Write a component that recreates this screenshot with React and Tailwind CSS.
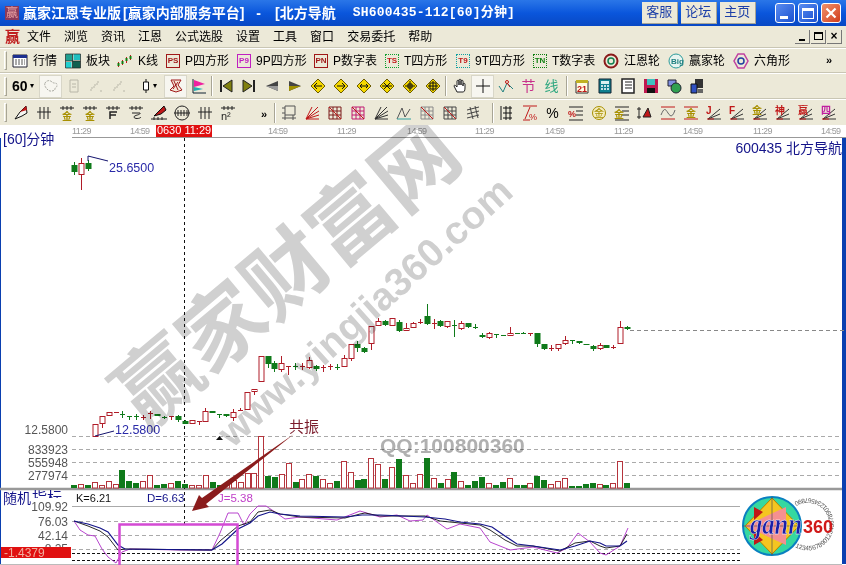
import React from 'react';

// page coordinates: x, body top, body bottom, wick top, wick bottom, kind (r hollow red, g green, c red cross, d green cross)
const candles = [
  [74,165,172,162,175,'g'],[81,163,174,158,190,'r'],[88,163,169,160,171,'g'],
  [95,424,436,424,437,'r'],[102,416,423,416,428,'r'],[109,412,415,412,416,'r'],[116,412,413,412,413,'c'],
  [122,414,415,411,418,'d'],[129,416,417,416,420,'d'],[136,416,417,414,420,'d'],[143,417,418,415,420,'c'],
  [150,413,416,411,419,'c'],[157,414,416,414,416,'g'],[164,417,418,416,419,'d'],[171,416,417,416,420,'c'],
  [178,416,420,415,422,'g'],[185,421,424,420,424,'g'],[192,420,423,420,424,'r'],[199,421,422,421,425,'c'],
  [205,411,421,408,421,'r'],[212,411,413,411,413,'g'],[219,414,415,414,418,'d'],[226,414,416,414,417,'g'],
  [233,412,417,409,421,'r'],[240,410,411,408,411,'c'],[247,392,409,392,410,'r'],[254,389,391,389,395,'r'],
  [261,356,381,356,382,'r'],[268,356,364,356,368,'g'],[274,363,369,361,372,'g'],[281,363,369,356,372,'r'],
  [288,366,367,366,375,'c'],[295,366,367,363,370,'d'],[302,366,367,363,370,'c'],[309,360,367,357,369,'r'],
  [316,366,369,365,371,'g'],[323,367,368,365,372,'c'],[330,366,367,364,370,'c'],[337,367,368,364,370,'d'],
  [344,358,366,355,366,'r'],[351,344,358,344,361,'r'],[357,344,348,341,352,'g'],[364,348,352,347,353,'g'],
  [371,326,343,326,350,'r'],[378,321,325,318,325,'r'],[385,321,325,320,326,'g'],[392,318,325,318,326,'r'],
  [399,322,331,320,332,'g'],[406,328,330,323,330,'r'],[413,323,327,322,328,'r'],[420,322,323,319,324,'c'],
  [427,316,324,304,325,'g'],[434,323,324,319,329,'c'],[440,321,326,320,327,'g'],[447,321,326,321,328,'r'],
  [454,325,326,320,337,'d'],[461,323,328,321,330,'r'],[468,323,327,323,328,'g'],[475,327,328,324,329,'d'],
  [482,335,337,333,338,'g'],[489,333,337,332,339,'r'],[496,334,335,334,338,'d'],[503,335,336,335,336,'d'],
  [510,333,335,327,335,'r'],[517,333,334,333,334,'d'],[523,333,334,332,334,'d'],[530,333,334,333,336,'c'],
  [537,333,344,333,347,'g'],[544,344,349,344,350,'g'],[551,348,349,345,351,'c'],[558,344,348,344,351,'r'],
  [565,340,343,336,345,'r'],[572,340,341,340,344,'d'],[579,341,343,341,344,'g'],[586,344,345,344,345,'g'],
  [593,346,349,345,351,'g'],[600,345,348,343,350,'r'],[606,345,348,345,348,'g'],[613,347,348,345,349,'c'],
  [620,327,343,321,343,'r'],[627,327,329,326,330,'g'],
];

const volumes = [
  [74,485,'g'],[81,484,'r'],[88,485,'g'],[95,482,'r'],[102,485,'r'],[109,481,'r'],[116,484,'r'],[122,470,'g'],
  [129,481,'g'],[136,483,'g'],[143,481,'r'],[150,475,'r'],[157,485,'g'],[164,484,'g'],[171,483,'r'],[178,481,'g'],
  [185,484,'g'],[192,485,'r'],[199,485,'r'],[206,475,'r'],[213,482,'g'],[220,485,'g'],[227,483,'r'],[234,480,'r'],
  [241,482,'r'],[248,473,'r'],[254,473,'r'],[261,436,'r'],[268,476,'g'],[275,477,'g'],[282,474,'r'],[289,463,'r'],
  [296,482,'g'],[302,479,'r'],[309,474,'r'],[316,476,'g'],[323,479,'r'],[330,483,'r'],[337,481,'g'],[344,461,'r'],
  [351,472,'r'],[358,480,'g'],[364,479,'g'],[371,458,'r'],[378,464,'r'],[385,479,'g'],[392,467,'r'],[399,459,'g'],
  [406,475,'r'],[413,483,'r'],[420,474,'r'],[427,458,'g'],[434,478,'r'],[441,483,'g'],[448,479,'r'],[454,472,'g'],
  [461,481,'r'],[468,485,'g'],[475,481,'g'],[482,477,'g'],[489,483,'r'],[496,485,'g'],[503,482,'g'],[510,478,'r'],
  [517,485,'g'],[524,485,'g'],[530,483,'r'],[537,476,'g'],[544,480,'g'],[551,484,'r'],[558,481,'r'],[565,478,'r'],
  [572,486,'g'],[579,486,'g'],[586,484,'g'],[593,483,'g'],[600,484,'r'],[606,485,'g'],[613,483,'r'],[620,461,'r'],[627,483,'g'],
];

const lineJ = '74,521 80,530 88,535 95,536 102,549 108,557 116,563 122,552 130,549 180,550 212,550 220,533 228,513 238,513 244,525 250,514 258,506 266,506 275,512 285,519 300,517 337,520 360,511 380,517 397,515 410,521 423,520 427,515 447,529 460,524 480,528 490,542 510,550 533,547 557,553 567,548 578,533 590,542 600,553 606,555 620,546 628,528';
const lineK = '74,521 88,526 100,531 108,537 118,550 125,549 212,550 220,541 238,526 250,522 258,512 270,510 280,514 300,517 345,518 360,514 365,513 380,516 425,516 440,521 460,523 480,525 490,530 505,540 517,546 533,546 560,551 575,543 590,541 600,546 606,548 620,546 627,534';
const lineD = '74,521 88,524 100,528 108,532 118,545 125,549 212,550 222,544 238,529 250,523 258,516 270,512 280,514 300,516 345,517 362,515 380,515 425,517 445,519 460,522 480,524 492,527 505,536 517,544 533,546 560,550 575,546 590,541 600,543 606,546 620,546 627,541';

const timeLabels = [
  ['11:29', 'w-[58px]'], ['14:59', 'w-[26px]'], ['red', 'w-[56px]'], ['', 'w-[56px]'],
  ['14:59', 'w-[69px]'], ['11:29', 'w-[70px]'], ['14:59', 'w-[68px]'], ['11:29', 'w-[70px]'],
  ['14:59', 'w-[69px]'], ['11:29', 'w-[69px]'], ['14:59', 'w-[70px]'], ['11:29', 'w-[68px]'], ['14:59', 'w-[20px]'],
];

const Ic = ({ children, w = 16 }) => (
  <svg width={w} height="16" viewBox="0 0 16 16" fill="none" className="block shrink-0">{children}</svg>
);

const Grip = () => <div className="w-[3px] h-[19px] mx-[4px] border-l border-t border-white border-r border-r-[#a8a595] border-b border-b-[#a8a595] shrink-0" />;
const Sep = ({ m = 'mx-[1px]' }) => <div className={`w-[2px] h-[20px] ${m} border-l border-[#a8a595] bg-white shrink-0`} />;

const Tagged = ({ t, c }) => (
  <div className={`w-[14px] h-[14px] border text-[8px] leading-[12px] text-center font-bold ${c}`}>{t}</div>
);

const Labeled = ({ icon, label, w }) => (
  <div className={`flex items-center gap-[5px] shrink-0 ${w}`}>
    {icon}
    <span className="text-[12px] text-black whitespace-nowrap">{label}</span>
  </div>
);

const Ring = ({ c, inner }) => (
  <Ic>
    <circle cx="8" cy="8" r="6.5" stroke={c} strokeWidth="2" />
    <circle cx="8" cy="8" r="3" stroke={inner} strokeWidth="1.5" />
  </Ic>
);

const Diamond = ({ children }) => (
  <div className="w-[23px] flex justify-center shrink-0">
    <Ic>
      <path d="M8 1 15 8 8 15 1 8Z" fill="#f5d800" stroke="#6b5a00" />
      {children}
    </Ic>
  </div>
);

const Cell = ({ children, active }) => (
  <div className={`w-[23px] h-[23px] flex items-center justify-center shrink-0 ${active ? 'bg-[#f7f6f0] border border-[#d8d6c8]' : ''}`}>{children}</div>
);

const Fan = ({ c = '#c01818' }) => <Ic><path d="M2 14 14 2M2 14 15 6M2 14 15 10M2 14 8 2M2 14H15" stroke={c} /></Ic>;
const Wedge = ({ c = '#c01818', t = '', tc = '#c01818' }) => (
  <Ic>
    <path d="M2 14 14 4M2 14 14 9M2 14H15" stroke="#333" />
    <text x="0" y="9" fontSize="10" fontWeight="700" fill={tc}>{t}</text>
    <path d="M1 14h7" stroke={c} />
  </Ic>
);
const Hatch = ({ c = '#7a1a1a' }) => (
  <Ic>
    <path d="M2 2h12v12H2ZM2 6h12M2 10h12M6 2v12M10 2v12" stroke={c} />
    <path d="M2 2 14 14" stroke="#c01818" />
  </Ic>
);
const Bars4 = () => <Ic><path d="M4 2v12M8 2v12M12 2v12M1 7h14" stroke="#222" /></Ic>;
const Gold = ({ c = '#a89000' }) => (
  <Ic>
    <path d="M1 3h14M4 1v4M8 1v4M12 1v4" stroke="#222" />
    <text x="3" y="15" fontSize="10" fontWeight="700" fill={c}>金</text>
  </Ic>
);

const MainToolbar = () => (
  <div className="h-[25px] flex items-center border-b border-[#c9c6b4] border-t border-t-white text-[12px]">
    <Grip />
    <div className="w-[1px]" />
    <Labeled w="w-[52px]" label="行情" icon={
      <Ic><path d="M1 2h14v12H1Z" fill="#fff" stroke="#223" /><path d="M1 2h14v3H1Z" fill="#1c2f8f" /><path d="M3 7h10M3 9h10M3 11h10" stroke="#555" strokeDasharray="2 1" /></Ic>
    } />
    <Labeled w="w-[52px]" label="板块" icon={
      <Ic w={17}><path d="M1 1h7v7H1Z" fill="#20a090" /><path d="M9 1h7v6H9Z" fill="#20c0c0" /><path d="M1 9h6v6H1Z" fill="#20d0d0" /><path d="M8 8h8v7H8Z" fill="#106050" /><path d="M1 1h15v14H1ZM8 1v14M1 8h15" stroke="#222" strokeWidth=".7" /></Ic>
    } />
    <Labeled w="w-[50px]" label="K线" icon={
      <Ic w={17}><path d="M2 9v5M6 7v5M10 4v6M14 2v5" stroke="#c01818" /><path d="M1 10h2v3H1ZM5 8h2v3H5ZM9 5h2v3H9ZM13 3h2v3h-2Z" fill="#108010" /></Ic>
    } />
    <Labeled w="w-[71px]" label="P四方形" icon={<Tagged t="PS" c="border-[#a01818] text-[#a01818]" />} />
    <Labeled w="w-[77px]" label="9P四方形" icon={<Tagged t="P9" c="border-[#c020c0] text-[#c020c0]" />} />
    <Labeled w="w-[71px]" label="P数字表" icon={<Tagged t="PN" c="border-[#a01818] text-[#a01818]" />} />
    <Labeled w="w-[71px]" label="T四方形" icon={<Tagged t="TS" c="border-[#10a030] border-dotted text-[#c01818]" />} />
    <Labeled w="w-[77px]" label="9T四方形" icon={<Tagged t="T9" c="border-[#10a0a0] border-dotted text-[#c01818]" />} />
    <Labeled w="w-[70px]" label="T数字表" icon={<Tagged t="TN" c="border-[#108010] border-dotted text-[#108010]" />} />
    <Labeled w="w-[65px]" label="江恩轮" icon={<Ring c="#8a1a1a" inner="#108050" />} />
    <Labeled w="w-[65px]" label="赢家轮" icon={
      <Ic><circle cx="8" cy="8" r="7" stroke="#2a9a9a" fill="#e8f4f0" /><text x="3" y="11" fontSize="8" fill="#208080" fontWeight="700">Big</text></Ic>
    } />
    <Labeled w="w-[93px]" label="六角形" icon={
      <Ic><path d="M5 1h6l4 7-4 7H5L1 8Z" stroke="#c040a0" strokeWidth="1.5" /><circle cx="8" cy="8" r="3" stroke="#2040a0" strokeWidth="1.5" /></Ic>
    } />
    <span className="text-[11px] font-bold leading-none tracking-[-1px] text-black">»</span>
  </div>
);

const PeriodToolbar = () => (
  <div className="h-[26px] flex items-center border-b border-[#c9c6b4] border-t border-t-white">
    <Grip />
    <span className="ml-[1px] w-[18px] text-[14px] font-bold text-black leading-none">60</span>
    <span className="w-[9px] text-[8px] text-black">▾</span>
    <Cell active><Ic><path d="M2 5c2-3 5-3 7-1s5 0 5 3-2 2-2 4-5 3-7 1-4-4-3-7Z" stroke="#a8a8a0" strokeDasharray="2 1" /></Ic></Cell>
    <Cell><Ic><path d="M4 2h8v12H4ZM6 6h4M6 9h4" stroke="#b8b6a8" /></Ic></Cell>
    <Cell><Ic><path d="M2 13V10h3V7h3V4h2M12 14v-2" stroke="#b8b6a8" strokeDasharray="2 1" /></Ic></Cell>
    <Cell><Ic><path d="M2 13V10h3V7h3V4h2M12 14v-2" stroke="#b8b6a8" strokeDasharray="2 1" /></Ic></Cell>
    <div className="w-[3px]" />
    <Cell><Ic><path d="M8 1v14" stroke="#111" /><path d="M5.500 4h5v8h-5Z" fill="#fff" stroke="#111" /></Ic></Cell>
    <span className="-ml-[4px] mr-[4px] w-[7px] text-[8px] text-black">▾</span>
    <Cell active><Ic><path d="M3 2 13 2 10 7 14 12 8 14 2 12 6 8Z M6 3 10 12 M10 4 5 11" stroke="#a01818" fill="#f4e8d8" /></Ic></Cell>
    <Cell><Ic><path d="M2 1v14h13" stroke="#123" /><path d="M3 2 14 6 3 9Z" fill="#f020a0" /><path d="M3 9 12 11 3 13Z" fill="#20b0b0" /></Ic></Cell>
    <Sep />
    <Cell><Ic><path d="M2 2h2v12H2Z" fill="#222" /><path d="M14 2v12L5 8Z" fill="#808010" stroke="#222" /></Ic></Cell>
    <Cell><Ic><path d="M12 2h2v12h-2Z" fill="#222" /><path d="M2 2v12L11 8Z" fill="#808010" stroke="#222" /></Ic></Cell>
    <Cell><Ic><path d="M14 3v10L2 8Z" fill="#444" /><path d="M14 8v5L2 8Z" fill="#999" /></Ic></Cell>
    <Cell><Ic><path d="M2 3v10L14 8Z" fill="#444" /><path d="M2 8v5L14 8Z" fill="#a09000" /></Ic></Cell>
    <Diamond><path d="M12 8H4M7 5 4 8l3 3" stroke="#111" /></Diamond>
    <Diamond><path d="M4 8h8M9 5l3 3-3 3" stroke="#111" /></Diamond>
    <Diamond><path d="M4 8h8M6 6 4 8l2 2M10 6l2 2-2 2" stroke="#111" /></Diamond>
    <Diamond><path d="M3 8h10M5 5l3 3-3 3M11 5 8 8l3 3" stroke="#111" /></Diamond>
    <Diamond><path d="M3 8h10M8 3v10M6 6h4v4H6Z" stroke="#111" /></Diamond>
    <Diamond><path d="M3 8h10M8 3v10M5 5h6v6H5Z" stroke="#111" /></Diamond>
    <Sep />
    <Cell><Ic><path d="M5 14 2 8c0-1 1-1 2 0l1 1V3c0-1 2-1 2 0v4-5c0-1 2-1 2 0v5-4c0-1 2-1 2 0v5-2c0-1 2-1 2 0v4c0 3-1 4-2 4Z" stroke="#222" fill="#fff" /></Ic></Cell>
    <Cell active><Ic><path d="M8 1v14M1 8h14" stroke="#111" /></Ic></Cell>
    <Cell><Ic><path d="M1 8 5 14 9 5 15 11" stroke="#208080" /><path d="M9 5 12 9" stroke="#c01818" /><circle cx="9" cy="4" r="1.500" stroke="#c01818" /></Ic></Cell>
    <Cell><span className="text-[14px] leading-none text-[#c8308a]">节</span></Cell>
    <Cell><span className="text-[14px] leading-none text-[#30a880]">线</span></Cell>
    <Sep m="ml-[3px] mr-[2px]" />
    <Cell><Ic><path d="M2 3h12v12H2Z" fill="#fffbe0" stroke="#333" /><path d="M2 2h12v3H2Z" fill="#c0b020" /><text x="3" y="14" fontSize="9" fontWeight="700" fill="#c01818">21</text></Ic></Cell>
    <Cell><Ic><path d="M2 1h12v14H2Z" fill="#108090" stroke="#123" /><path d="M4 3h8v3H4Z" fill="#d8f0f0" /><path d="M4 8h2M7 8h2M10 8h2M4 11h2M7 11h2M10 11h2" stroke="#fff" strokeWidth="1.500" /></Ic></Cell>
    <Cell><Ic><path d="M2 1h12v14H2Z" fill="#fff" stroke="#222" strokeWidth="1.500" /><path d="M5 4h7M5 7h7M5 10h7" stroke="#222" /></Ic></Cell>
    <Cell><Ic><path d="M1 1h14v14H1Z" fill="#c01850" /><path d="M4 1h8v6H4Z" fill="#40c0c0" /><path d="M4 10h8v5H4Z" fill="#111" /></Ic></Cell>
    <Cell><Ic><path d="M2 2h8v6H2Z" fill="#8090e0" stroke="#223" /><circle cx="10" cy="10" r="5" fill="#30a050" stroke="#223" /></Ic></Cell>
    <Cell><Ic><path d="M6 1h8v9H6Z" fill="#333" /><path d="M2 6h6v9H2Z" fill="#3050c0" stroke="#111" /><path d="M9 11h5v4H9Z" fill="#666" /></Ic></Cell>
  </div>
);

const DrawToolbar = () => (
  <div className="h-[26px] flex items-center border-t border-t-white">
    <Grip />
    <div className="-ml-[2px]" />
    <Cell><Ic><path d="M2 14 7 7l6-6 1 7-5 3Z" fill="#f4f4f0" stroke="#111" /><path d="M7 7l6-6 1 4Z" fill="#c01818" /></Ic></Cell>
    <Cell><Bars4 /></Cell>
    <Cell><Gold /></Cell>
    <Cell><Gold /></Cell>
    <Cell><Ic><path d="M1 3h14M4 1v4M8 1v4M12 1v4" stroke="#222" /><path d="M5 14V7h7M5 10h6" stroke="#222" strokeWidth="1.500" /></Ic></Cell>
    <Cell><Ic><path d="M1 3h14M4 1v4M8 1v4M12 1v4" stroke="#222" /><path d="M4 8h8c1 2-6 2-6 4s6 2 7 0" stroke="#222" /></Ic></Cell>
    <Cell><Ic><path d="M3 11 8 6l5-5 2 4-5 4Z" fill="#c01818" stroke="#111" /><path d="M0 14h16M3 12v3M7 12v3M11 12v3" stroke="#222" /></Ic></Cell>
    <Cell><Ic><circle cx="8" cy="8" r="7" stroke="#222" /><path d="M0 8h16M4 5v6M7 5v6M10 5v6M13 5v6" stroke="#222" /></Ic></Cell>
    <Cell><Bars4 /></Cell>
    <Cell><Ic><path d="M1 3h14M4 1v4M8 1v4M12 1v4" stroke="#222" /><text x="1" y="15" fontSize="11" fill="#222">n²</text></Ic></Cell>
    <div className="w-[28px] text-right"><span className="text-[11px] font-bold leading-none text-black">»</span></div>
    <div className="w-[6px]" />
    <Sep />
    <Cell><Ic><path d="M4 1h10v9H4ZM1 3h3M1 8h3M1 13h14M4 10v5M12 10v5" stroke="#555" /></Ic></Cell>
    <Cell><Fan /></Cell>
    <Cell><Hatch /></Cell>
    <Cell><Hatch c="#c01870" /></Cell>
    <Cell><Fan c="#333" /></Cell>
    <Cell><Ic><path d="M1 14 6 3l3 9 5-8" stroke="#555" /><path d="M1 14h14" stroke="#30a0a0" /></Ic></Cell>
    <Cell><Hatch c="#888" /></Cell>
    <Cell><Hatch c="#444" /></Cell>
    <Cell><Ic><path d="M2 5 14 2M2 9 14 6M2 13 14 10M5 2l3 12M10 1l3 12" stroke="#444" /></Ic></Cell>
    <Sep m="ml-[8px] mr-[1px]" />
    <Cell><Ic><path d="M2 1v14M4 3h9M4 8h9M4 13h9M7 1v14M11 1v14" stroke="#111" /></Ic></Cell>
    <Cell><Ic><path d="M1 1h14M3 14 8 2M8 15H1" stroke="#c01818" /><text x="7" y="15" fontSize="9" fill="#c01818">%</text></Ic></Cell>
    <Cell><span className="text-[14px] leading-none text-black">%</span></Cell>
    <Cell><Ic><path d="M1 2h14M8 6h7M8 10h7M1 15h14" stroke="#222" /><text x="0" y="12" fontSize="9" fill="#c01818" fontWeight="700">%</text></Ic></Cell>
    <Cell><Ic><circle cx="8" cy="8" r="6.500" fill="#f4ecc0" stroke="#a89000" /><text x="3" y="12" fontSize="10" fill="#a89000">金</text></Ic></Cell>
    <Cell><Ic><path d="M1 2h14M8 6h7M8 10h7M1 15h14" stroke="#222" /><text x="0" y="13" fontSize="10" fill="#a89000" fontWeight="700">金</text></Ic></Cell>
    <Cell><Ic><path d="M2 2v12M0 4h4M0 12h4" stroke="#222" /><path d="M6 12 11 3l3 9Z" fill="#c01818" stroke="#222" /></Ic></Cell>
    <Cell><Ic><path d="M1 2h14M1 14h14" stroke="#c01818" /><path d="M1 10c3-7 4-7 7-2s5 3 7-3" stroke="#666" /></Ic></Cell>
    <Cell><Ic><path d="M1 2h14M1 14h14" stroke="#c01818" /><text x="3" y="12" fontSize="10" fill="#a89000" fontWeight="700">金</text></Ic></Cell>
    <Cell><Wedge t="J" /></Cell>
    <Cell><Wedge t="F" /></Cell>
    <Cell><Wedge t="金" tc="#a89000" /></Cell>
    <Cell><Wedge t="神" /></Cell>
    <Cell><Wedge t="赢" /></Cell>
    <Cell><Wedge t="四" tc="#c020a0" /></Cell>
  </div>
);

const GannLogo = () => (
  <g>
    <circle cx="772" cy="526" r="29" fill="#35d8a0" stroke="#0a80c0" strokeWidth="2" />
    <path d="M772 498 799 526 772 554 745 526Z" fill="#f5c520" stroke="#b08000" />
    <path d="M745 526 786 507V545Z" fill="#f59090" />
    <path d="M754 507 763 512 754 520ZM754 532 763 540 754 545Z" fill="#c01818" />
    <path d="M772 497V555M743 526H801" stroke="#555" strokeWidth=".7" />
    <path id="gannArc" d="M795 547A26 26 0 1 0 793 503" fill="none" />
    <text fontSize="6.500" fill="#555"><textPath href="#gannArc" startOffset="0">12345678901234567890123456789012345</textPath></text>
    <text x="750" y="534" fontSize="30" fontStyle="italic" fontWeight="700" fontFamily="'Liberation Serif',serif" fill="#1a20a8" stroke="#fff" strokeWidth=".4" textLength="52" lengthAdjust="spacingAndGlyphs">gann</text>
    <text x="803" y="533" fontSize="18" fontWeight="700" fill="#d01818">360</text>
  </g>
);

const Chart = () => (
  <svg width="841" height="427" viewBox="1 138 841 427" className="block overflow-visible">
    <defs>
      <clipPath id="indexClip"><rect x="30" y="488" width="34" height="10" /></clipPath>
    </defs>
    <g stroke="#aaa" strokeDasharray="4 3">
      {[436, 449, 462, 475].map(y => <path key={y} d={`M72 ${y + .5}H842`} />)}
      {[521, 535, 549].map(y => <path key={y} d={`M72 ${y + .5}H740`} />)}
      <path d="M630 330.500H846" stroke="#888" />
    </g>
    <path d="M0 489H842" stroke="#999" strokeWidth="2.500" />
    <path d="M72 506.500H740" stroke="#aaa" />
    <path d="M0 564.500H842" stroke="#bbb" />
    <g stroke="#111" strokeDasharray="3 2">
      <path d="M72 553.500H740M72 560.500H740" />
      <path d="M184.500 138V524" strokeDasharray="3 3" />
    </g>

    {volumes.map(([x, top, k]) => (
      k === 'g'
        ? <rect key={x} x={x - 3} y={top} width="6" height={488 - top} fill="#0f7a1a" />
        : <rect key={x} x={x - 2.500} y={top + .5} width="5" height={487.500 - top} fill="#fff" stroke="#b5343c" />
    ))}

    {candles.map(([x, t, b, wt, wb, k]) => {
      const col = k === 'g' || k === 'd' ? '#0f7a1a' : '#b01c28';
      if (k === 'c' || k === 'd') {
        return (
          <g key={x + '-' + t} stroke={col}>
            <path d={`M${x + .5} ${wt}V${wb}M${x - 2} ${t + .5}H${x + 3}`} />
          </g>
        );
      }
      return (
        <g key={x + '-' + t}>
          <path d={`M${x + .5} ${wt}V${wb}`} stroke={col} />
          {k === 'g'
            ? <rect x={x - 2.500} y={t} width="6" height={b - t} fill={col} />
            : <rect x={x - 2} y={t + .5} width="5" height={b - t} fill="#fff" stroke={col} />}
        </g>
      );
    })}

    <path d="M88 161V156L108 161" stroke="#14146e" fill="none" />
    <path d="M95 436 114 431" stroke="#14146e" fill="none" />
    <path d="M216 440h7l-3.500-4Z" fill="#111" />

    <polyline points={lineJ} fill="none" stroke="#b030c8" strokeWidth=".9" />
    <polyline points={lineK} fill="none" stroke="#111" strokeWidth=".9" />
    <polyline points={lineD} fill="none" stroke="#14148a" strokeWidth="1.200" />
    <rect x="119.500" y="524.500" width="118" height="42" fill="none" stroke="#d44ad4" strokeWidth="2.500" />

    <path d="M294 434 206 504 209 507 192 511 199 495 202 498Z" fill="#8a1c1c" />

    <g fontSize="12" fill="#555" textAnchor="end">
      <text x="68" y="434">12.5800</text>
      <text x="68" y="454">833923</text>
      <text x="68" y="467">555948</text>
      <text x="68" y="480">277974</text>
      <text x="68" y="511">109.92</text>
      <text x="68" y="526">76.03</text>
      <text x="68" y="540">42.14</text>
      <text x="68" y="553">8.25</text>
    </g>
    <rect x="1" y="547" width="70" height="11" fill="#e01010" />
    <text x="4" y="557" fontSize="12" fill="#f0b0a0">-1.4379</text>

    <text x="3" y="144" fontSize="14" fill="#14148a">[60]分钟</text>
    <text x="842" y="153" fontSize="14" fill="#14148a" textAnchor="end">600435 北方导航</text>
    <text x="109" y="172" fontSize="12.500" fill="#2a2aa8">25.6500</text>
    <text x="115" y="434" fontSize="12.500" fill="#2a2aa8">12.5800</text>
    <text x="3" y="503" fontSize="14" fill="#14148a">随机</text>
    <text x="32" y="503" fontSize="15" fill="#14148a" clipPath="url(#indexClip)">指标</text>
    <text x="76" y="502" fontSize="11" fill="#111">K=6.21</text>
    <text x="147" y="502" fontSize="11.500" fill="#14148a">D=6.63</text>
    <text x="218" y="502" fontSize="11.500" fill="#c040c8">J=5.38</text>
    <text x="289" y="432" fontSize="15" fill="#7a1a2a">共振</text>
    <GannLogo />
  </svg>
);

const App = () => (
  <div className="w-[846px] h-[565px] overflow-hidden flex flex-col bg-[#ece9d8] font-['Liberation_Sans','Noto_Sans_CJK_SC',sans-serif]">
    <div className="h-[26px] shrink-0 flex items-center bg-gradient-to-b from-[#2a76e8] via-[#0a56dc] to-[#0848c4] text-white">
      <span className="ml-[5px] w-[14px] h-[14px] bg-[#8a3a5a] text-[#e8a0a0] text-[12px] leading-[14px] text-center shrink-0">赢</span>
      <span className="ml-[4px] text-[14px] font-bold whitespace-nowrap">赢家江恩专业版</span>
      <span className="ml-[2px] text-[14px] font-bold whitespace-nowrap">[赢家内部服务平台]</span>
      <span className="ml-[12px] text-[14px] font-bold">-</span>
      <span className="ml-[14px] text-[14px] font-bold whitespace-nowrap">[北方导航</span>
      <span className="ml-[17px] text-[13px] font-bold tracking-[.2px] whitespace-nowrap w-[289px] font-['Liberation_Mono','Noto_Sans_CJK_SC',monospace]">SH600435-112[60]分钟]</span>
      <div className="flex gap-[3px]">
        {['客服', '论坛', '主页'].map(t => (
          <span key={t} className="w-[36px] h-[22px] bg-[#ece9d8] text-[#1c3fa8] text-[13px] leading-[20px] text-center border-r border-b border-[#a8a595]">{t}</span>
        ))}
      </div>
      <div className="ml-[19px] flex gap-[3px]">
        <div className="w-[20px] h-[20px] rounded-[3px] border border-white bg-gradient-to-br from-[#5a8cf0] to-[#1a50d0] flex items-end pl-[4px] pb-[3px]"><div className="w-[8px] h-[3px] bg-white" /></div>
        <div className="w-[20px] h-[20px] rounded-[3px] border border-white bg-gradient-to-br from-[#5a8cf0] to-[#1a50d0] flex items-center justify-center"><div className="w-[12px] h-[11px] border border-white border-t-[3px]" /></div>
        <div className="w-[20px] h-[20px] rounded-[3px] border border-white bg-gradient-to-br from-[#f0906a] to-[#d03a18] flex items-center justify-center">
          <svg width="12" height="12" viewBox="0 0 12 12"><path d="M1.500 1.500l9 9M10.500 1.500l-9 9" stroke="#fff" strokeWidth="2.200" /></svg>
        </div>
      </div>
    </div>

    <div className="h-[22px] shrink-0 flex items-center border-b border-[#c9c6b4]">
      <span className="ml-[5px] w-[22px] text-[15px] leading-none text-[#c02020] font-bold">赢</span>
      <div className="flex gap-[13px] text-[12px] text-black">
        {['文件', '浏览', '资讯', '江恩', '公式选股', '设置', '工具', '窗口', '交易委托', '帮助'].map(m => <span key={m}>{m}</span>)}
      </div>
      <div className="ml-auto mr-[4px] flex gap-[1px]">
        <div className="w-[15px] h-[14px] border-r border-b border-[#777] flex items-end justify-center pb-[2px]"><div className="w-[6px] h-[2px] bg-black" /></div>
        <div className="w-[15px] h-[14px] border-r border-b border-[#777] flex items-center justify-center"><div className="w-[9px] h-[8px] border border-black border-t-2" /></div>
        <div className="w-[15px] h-[14px] border-r border-b border-[#777] flex items-center justify-center text-[12px] leading-none font-bold text-black">×</div>
      </div>
    </div>

    <MainToolbar />
    <PeriodToolbar />
    <DrawToolbar />

    <div className="relative flex-1 overflow-hidden bg-white">
      <div className="h-[13px] bg-white pl-[72px]">
        <div className="h-[13px] flex items-center border-b border-[#999] text-[9px] tracking-[-.6px] leading-none text-[#999] whitespace-nowrap">
          {timeLabels.map(([t, w], i) => (
            t === 'red'
              ? <span key={i} className={`${w} h-[12px] bg-[#e01010] text-white text-[11px] tracking-normal text-center`}>0630 11:29</span>
              : <span key={i} className={`${w} shrink-0`}>{t}</span>
          ))}
        </div>
      </div>
      <div className="flex h-[426px] border-l border-l-[#0a3fb0] border-r-[4px] border-r-[#0a3fb0]">
        <Chart />
      </div>
      <div className="absolute inset-0 pointer-events-none mix-blend-multiply">
        <span className="absolute left-[67px] top-[104px] w-[440px] text-center text-[84px] leading-[90px] font-bold whitespace-nowrap text-[#d0d0d0] -rotate-[40deg]">赢家财富网</span>
        <span className="absolute left-[165px] top-[163px] w-[400px] text-center text-[39px] leading-[48px] font-bold whitespace-nowrap text-[#cfcfcf] -rotate-[42deg]">www.yingjia360.com</span>
        <span className="absolute left-[380px] top-[309px] text-[21px] leading-[24px] font-bold whitespace-nowrap text-[#b0b0b0]">QQ:100800360</span>
      </div>
    </div>
  </div>
);

export default App;
